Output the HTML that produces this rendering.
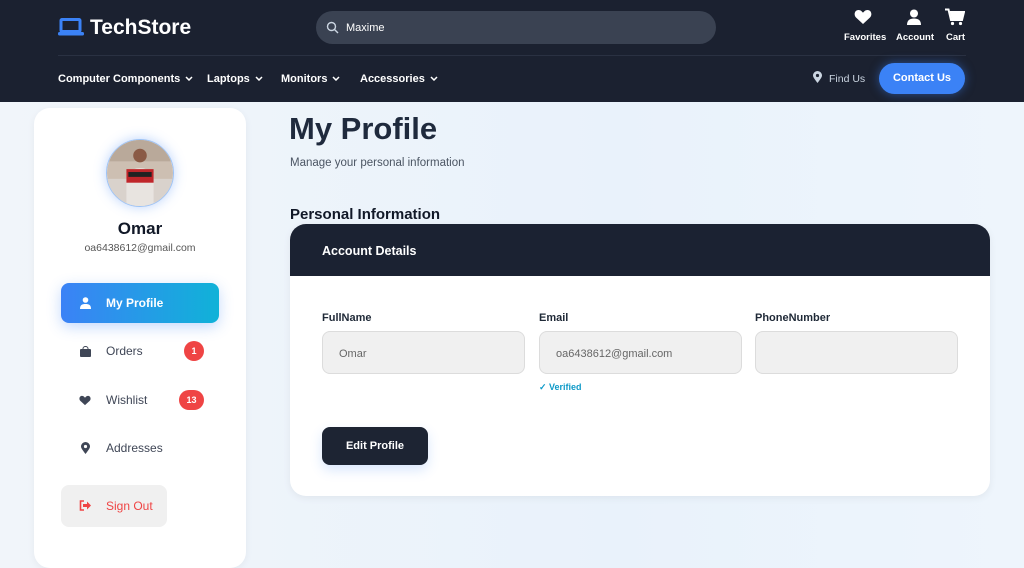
<!DOCTYPE html>
<html><head><style>
*{box-sizing:border-box;margin:0;padding:0}
body{width:1024px;height:550px;overflow:hidden;font-family:"Liberation Sans",sans-serif;background:linear-gradient(90deg,#f1f5fa,#e9f2fb 60%,#eef5fc);position:relative}
.hdr{position:absolute;left:0;top:0;width:1024px;height:102px;background:#1b2130}
.abs{position:absolute}
.nav{color:#fff;font-size:11px;font-weight:bold;top:73px}
.nav svg{margin-left:5px;vertical-align:1px}
.card{position:absolute;background:#fff;border-radius:16px}
.mi{position:absolute;left:61px;width:158px;height:40px;font-size:12px;color:#3f4656;display:flex;align-items:center}
.mi span{position:absolute;left:45px}
.badge{position:absolute;height:20px;border-radius:10px;background:#ef4444;color:#fff;font-size:9px;font-weight:bold;display:flex;align-items:center;justify-content:center}
.lbl{position:absolute;top:312px;font-size:11px;font-weight:bold;color:#1f2937}
.inp{position:absolute;top:331px;width:203px;height:43px;background:#f0f0f0;border:1px solid #dcdcdc;border-radius:8px;font-size:11px;color:#666;padding:16px 0 0 16px}
</style></head><body>
<div class="hdr"></div>
<svg class="abs" style="left:58px;top:18px" width="26" height="18" viewBox="0 0 26 18"><rect x="3" y="1.5" width="19" height="12" rx="1" fill="none" stroke="#3b82f6" stroke-width="3"/><rect x="0" y="14" width="26" height="3.5" rx="1.5" fill="#3b82f6"/></svg>
<div class="abs" style="left:90px;top:16px;color:#fff;font-size:21px;font-weight:bold">TechStore</div>
<div class="abs" style="left:316px;top:11px;width:400px;height:33px;border-radius:17px;background:#3a4252"></div>
<svg class="abs" style="left:326px;top:21px" width="13" height="13" viewBox="0 0 13 13"><circle cx="5.5" cy="5.5" r="4" fill="none" stroke="#cbd5e1" stroke-width="1.4"/><path d="M8.5 8.5L12 12" stroke="#cbd5e1" stroke-width="1.4"/></svg>
<div class="abs" style="left:346px;top:22px;color:#fff;font-size:11px">Maxime</div>
<svg class="abs" style="left:854px;top:9px" width="18" height="16" viewBox="0 0 18 16"><path d="M9 15L2 8.5C-0.5 6 0.5 1 4.5 1 6.7 1 8 2.5 9 3.8 10 2.5 11.3 1 13.5 1 17.5 1 18.5 6 16 8.5Z" fill="#fff"/></svg>
<svg class="abs" style="left:906px;top:9px" width="16" height="17" viewBox="0 0 16 17"><circle cx="8" cy="4.5" r="4" fill="#fff"/><path d="M1 16C1 11 4 9.5 8 9.5S15 11 15 16Z" fill="#fff"/></svg>
<svg class="abs" style="left:945px;top:8px" width="20" height="18" viewBox="0 0 20 18"><path d="M0 1.5H3.5L6 12H17L19 4H5" fill="none" stroke="#fff" stroke-width="2"/><path d="M5 4H19L17 11H6.5Z" fill="#fff"/><circle cx="7.5" cy="15.5" r="1.6" fill="#fff"/><circle cx="15.5" cy="15.5" r="1.6" fill="#fff"/></svg>
<div class="abs" style="left:844px;top:32px;color:#fff;font-size:9.5px;font-weight:bold">Favorites</div>
<div class="abs" style="left:896px;top:32px;color:#fff;font-size:9.5px;font-weight:bold">Account</div>
<div class="abs" style="left:946px;top:32px;color:#fff;font-size:9.5px;font-weight:bold">Cart</div>
<div class="abs" style="left:58px;top:55px;width:908px;height:1px;background:#2a3142"></div>
<div class="abs nav" style="left:58px">Computer Components<svg width="8" height="5" viewBox="0 0 8 5"><path d="M1 1L4 4 7 1" stroke="#fff" stroke-width="1.5" fill="none"/></svg></div>
<div class="abs nav" style="left:207px">Laptops<svg width="8" height="5" viewBox="0 0 8 5"><path d="M1 1L4 4 7 1" stroke="#fff" stroke-width="1.5" fill="none"/></svg></div>
<div class="abs nav" style="left:281px">Monitors<svg width="8" height="5" viewBox="0 0 8 5"><path d="M1 1L4 4 7 1" stroke="#fff" stroke-width="1.5" fill="none"/></svg></div>
<div class="abs nav" style="left:360px">Accessories<svg width="8" height="5" viewBox="0 0 8 5"><path d="M1 1L4 4 7 1" stroke="#fff" stroke-width="1.5" fill="none"/></svg></div>
<svg class="abs" style="left:813px;top:71px" width="9" height="12" viewBox="0 0 9 12"><path d="M4.5 12C1.5 8 0 6 0 4.5A4.5 4.5 0 0 1 9 4.5C9 6 7.5 8 4.5 12Z" fill="#cbd5e1"/><circle cx="4.5" cy="4.5" r="1.6" fill="#1b2130"/></svg>
<div class="abs" style="left:829px;top:73px;color:#cbd5e1;font-size:10.5px">Find Us</div>
<div class="abs" style="left:879px;top:63px;width:86px;height:31px;border-radius:16px;background:#3b82f6;color:#fff;font-size:11px;font-weight:bold;text-align:center;line-height:31px;box-shadow:0 0 10px rgba(59,130,246,.5)">Contact Us</div>

<div class="card" style="left:34px;top:108px;width:212px;height:460px;box-shadow:0 2px 8px rgba(0,0,0,.05)"></div>
<svg class="abs" style="left:106px;top:139px;border-radius:50%;box-shadow:0 0 12px rgba(59,130,246,.35);border:1px solid #9ec3f5" width="68" height="68" viewBox="0 0 68 68"><rect width="68" height="68" fill="#cdbfb2"/><rect y="0" width="68" height="22" fill="#b9a99a"/><rect y="40" width="68" height="28" fill="#d9d2cc"/><circle cx="34" cy="16" r="7" fill="#8a5a45"/><path d="M20 68V34Q34 24 48 34V68Z" fill="#e8e4e0"/><rect x="20" y="30" width="28" height="14" fill="#c0262a"/><rect x="22" y="33" width="24" height="5" fill="#222"/></svg>
<div class="abs" style="left:0;width:280px;top:219px;text-align:center;font-size:17px;font-weight:bold;color:#111827">Omar</div>
<div class="abs" style="left:0;width:280px;top:242px;text-align:center;font-size:10.5px;color:#555">oa6438612@gmail.com</div>
<div class="mi" style="top:283px;border-radius:8px;background:linear-gradient(90deg,#3b82f6,#10b2d8);color:#fff;font-weight:bold;box-shadow:0 4px 14px rgba(59,130,246,.3)"><svg style="position:absolute;left:19px" width="11" height="12" viewBox="0 0 11 12"><circle cx="5.5" cy="3" r="2.8" fill="#fff"/><path d="M0 12C0 8 2 7 5.5 7S11 8 11 12Z" fill="#fff"/></svg><span>My Profile</span></div>
<div class="mi" style="top:331px"><svg style="position:absolute;left:19px" width="11" height="11" viewBox="0 0 11 11"><rect y="3" width="11" height="8" rx="1" fill="#3f4656"/><path d="M3 4V2.5A2.5 2 0 0 1 8 2.5V4" stroke="#3f4656" fill="none"/></svg><span>Orders</span></div>
<div class="badge" style="left:184px;top:341px;width:20px">1</div>
<div class="mi" style="top:380px"><svg style="position:absolute;left:18px" width="12" height="11" viewBox="0 0 18 16"><path d="M9 15L2 8.5C-0.5 6 0.5 1 4.5 1 6.7 1 8 2.5 9 3.8 10 2.5 11.3 1 13.5 1 17.5 1 18.5 6 16 8.5Z" fill="#3f4656"/></svg><span>Wishlist</span></div>
<div class="badge" style="left:179px;top:390px;width:25px">13</div>
<div class="mi" style="top:428px"><svg style="position:absolute;left:20px" width="9" height="12" viewBox="0 0 9 12"><path d="M4.5 12C1.5 8 0 6 0 4.5A4.5 4.5 0 0 1 9 4.5C9 6 7.5 8 4.5 12Z" fill="#3f4656"/><circle cx="4.5" cy="4.5" r="1.6" fill="#fff"/></svg><span>Addresses</span></div>
<div class="abs" style="left:61px;top:485px;width:106px;height:42px;border-radius:8px;background:#f0f0f0"></div>
<svg class="abs" style="left:79px;top:500px" width="12" height="11" viewBox="0 0 12 11"><path d="M5 1H1.5V10H5" fill="none" stroke="#ef4444" stroke-width="1.6"/><path d="M4 4H8V1.5L12 5.5 8 9.5V7H4Z" fill="#ef4444"/></svg>
<div class="abs" style="left:106px;top:499px;font-size:12px;color:#ef4444">Sign Out</div>

<div class="abs" style="left:289px;top:111px;font-size:31px;font-weight:bold;color:#1f2a3d">My Profile</div>
<div class="abs" style="left:290px;top:157px;font-size:11.5px;color:#4b5563">Manage your personal information</div>
<div class="abs" style="left:290px;top:206px;font-size:15px;font-weight:bold;color:#111827">Personal Information</div>
<div class="card" style="left:290px;top:224px;width:700px;height:272px;overflow:hidden;box-shadow:0 2px 8px rgba(0,0,0,.06)"><div style="height:52px;background:#1b2232;color:#fff;font-size:12.5px;font-weight:bold;padding:20px 0 0 32px">Account Details</div></div>
<div class="lbl" style="left:322px">FullName</div>
<div class="lbl" style="left:539px">Email</div>
<div class="lbl" style="left:755px">PhoneNumber</div>
<div class="inp" style="left:322px">Omar</div>
<div class="inp" style="left:539px">oa6438612@gmail.com</div>
<div class="inp" style="left:755px"></div>
<div class="abs" style="left:539px;top:382px;font-size:9px;font-weight:bold;color:#0e9ac8">✓ Verified</div>
<div class="abs" style="left:322px;top:427px;width:106px;height:38px;border-radius:8px;background:#1d2433;color:#fff;font-size:11px;font-weight:bold;text-align:center;line-height:38px;box-shadow:0 5px 12px rgba(59,130,246,.2)">Edit Profile</div>
</body></html>
